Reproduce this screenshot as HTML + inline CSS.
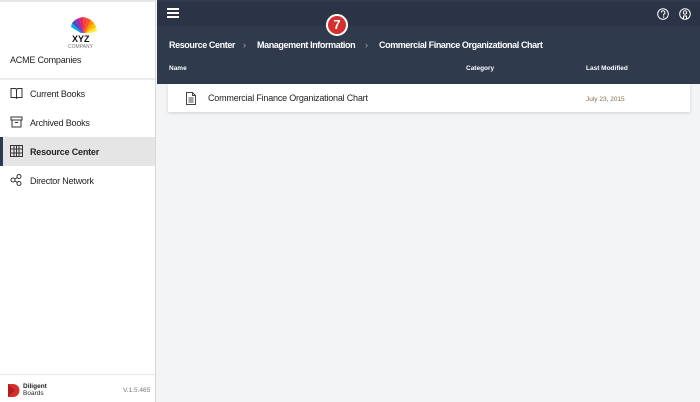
<!DOCTYPE html>
<html><head><meta charset="utf-8"><style>
*{margin:0;padding:0;box-sizing:border-box}
body{width:700px;height:402px;overflow:hidden;background:#f3f4f6;font-family:"Liberation Sans",sans-serif;position:relative}
.side{position:absolute;left:0;top:0;width:156px;height:402px;background:#fff;border-right:1px solid #d8d8d8;border-top:2px solid #e6e6e6}
.acme{position:absolute;left:10px;top:53px;font-size:9px;letter-spacing:-0.2px;color:#222}
.sep{position:absolute;left:0;top:76px;width:155px;height:2px;background:#ececec}
.item{position:absolute;left:0;width:155px;height:29px;font-size:9px;letter-spacing:-0.2px;color:#222;display:flex;align-items:center;padding-left:30px}
.item svg{position:absolute;left:10px;top:8px}
.act{background:#e5e5e5;font-weight:bold;border-left:3px solid #2c3a4f}
.main{position:absolute;left:157px;top:0;width:543px;height:84px;background:#2f3a4d}
.topbar{position:absolute;left:0;top:2px;width:543px;height:24px;background:#2a3446}
.bc{position:absolute;top:40px;font-size:9px;letter-spacing:-0.4px;font-weight:bold;color:#fff}
.col{position:absolute;top:65px;font-size:6.5px;font-weight:bold;color:#fff}
.card{position:absolute;left:168px;top:84px;width:522px;height:28px;background:#fff;box-shadow:0 1px 3px rgba(0,0,0,.15)}
</style></head><body>
<div class="side">
<svg style="position:absolute;left:58px;top:11px" width="44" height="36" viewBox="0 0 44 36">
<g transform="translate(26,22)">
<path d="M0 0 L-12 -12 L-9 -15Z" fill="#3f51b5"/>
<path d="M0 0 L-9 -15 L-5 -17Z" fill="#9c27b0"/>
<path d="M0 0 L-5 -17 L-1 -18Z" fill="#e91e63"/>
<path d="M0 0 L-1 -18 L3 -17Z" fill="#f44336"/>
<path d="M0 0 L3 -17 L7 -15Z" fill="#ff5722"/>
<path d="M0 0 L7 -15 L10 -12Z" fill="#ff9800"/>
<path d="M0 0 L10 -12 L12 -8Z" fill="#ffc107"/>
<path d="M0 0 L12 -8 L13 -4Z" fill="#ffeb3b"/>
<path d="M0 0 L-12 -12 L-13 -8Z" fill="#03a9f4"/>
</g>
<rect x="12" y="20" width="20" height="10" fill="#fff"/>
<text x="14" y="29" font-size="9" font-weight="bold" font-family="Liberation Sans" fill="#111">XYZ</text>
<text x="10" y="35" font-size="5" font-family="Liberation Sans" fill="#777">COMPANY</text>
</svg>
<div class="acme">ACME Companies</div>
<div class="sep"></div>
<div class="item" style="top:77px"><svg width="13" height="12" viewBox="0 0 13 12" fill="none" stroke="#333"><path d="M1 1.5h4.5l1 1 1-1H12v9H7.5l-1 .8-1-.8H1z M6.5 2.5v8.5"/></svg>Current Books</div>
<div class="item" style="top:106px"><svg width="13" height="12" viewBox="0 0 13 12" fill="none" stroke="#333"><path d="M1 1h11v3H1z M2 4v7h9V4 M5 6.5h3"/></svg>Archived Books</div>
<div class="item act" style="top:135px;padding-left:27px"><svg style="left:7px" width="13" height="12" viewBox="0 0 13 12" fill="none" stroke="#333"><path d="M.5 .5h12v11H.5z M4 .5v11 M6.5 .5v11 M9 .5v11 M.5 4h12 M.5 8h12"/></svg>Resource Center</div>
<div class="item" style="top:164px"><svg width="13" height="12" viewBox="0 0 13 12" fill="none" stroke="#333"><circle cx="3" cy="6" r="2"/><circle cx="9" cy="2.5" r="2"/><circle cx="9" cy="9.5" r="2"/><path d="M5 5l2.3-1.5 M5 7l2.3 1.5"/></svg>Director Network</div>
<div style="position:absolute;left:0;top:372px;width:155px;height:1px;background:#e6e6e6"></div>
<svg style="position:absolute;left:8px;top:382px" width="12" height="13" viewBox="0 0 12 13"><path d="M0 0h5a6 6 0 0 1 0 13H0z" fill="#d32f2f"/><path d="M0 0l7 6.5L0 13z" fill="#b71c1c"/></svg>
<div style="position:absolute;left:23px;top:381px;font-size:6.5px;font-weight:bold;color:#222;line-height:7px">Diligent<br><span style="font-weight:normal">Boards</span></div>
<div style="position:absolute;left:123px;top:385px;font-size:6.5px;color:#777">V.1.5.465</div>
</div>
<div class="main">
<div class="topbar">
<div style="position:absolute;left:10px;top:6px;width:12px;height:2px;background:#fff;box-shadow:0 4px 0 #fff,0 8px 0 #fff"></div>
<svg style="position:absolute;left:500px;top:6px" width="12" height="12" viewBox="0 0 12 12" fill="none" stroke="#fff"><circle cx="6" cy="6" r="5.3"/><path d="M4.3 4.6a1.8 1.8 0 1 1 2.3 1.7v1.3"/><circle cx="6.6" cy="9" r=".3"/></svg>
<svg style="position:absolute;left:522px;top:6px" width="12" height="12" viewBox="0 0 12 12" fill="none" stroke="#fff"><circle cx="6" cy="6" r="5.3"/><circle cx="6" cy="4.5" r="1.7"/><path d="M4.5 11V8h3v3"/></svg>
</div>
<div style="position:absolute;left:169px;top:14px;width:22px;height:22px;border-radius:50%;background:#d32f2f;border:2px solid #fff;color:#fff;font-weight:bold;font-size:13px;text-align:center;line-height:18px">7</div>
<div class="bc" style="left:12px">Resource Center</div>
<div class="bc" style="left:86px;font-weight:normal;color:#aaa">›</div>
<div class="bc" style="left:100px">Management Information</div>
<div class="bc" style="left:208px;font-weight:normal;color:#aaa">›</div>
<div class="bc" style="left:222px">Commercial Finance Organizational Chart</div>
<div class="col" style="left:12px">Name</div>
<div class="col" style="left:309px">Category</div>
<div class="col" style="left:429px">Last Modified</div>
</div>
<div class="card">
<svg style="position:absolute;left:18px;top:8px" width="10" height="13" viewBox="0 0 10 13" fill="none" stroke="#444"><path d="M.5 .5h6l3 3v9h-9z M6.5 .5v3h3 M2.5 6h5 M2.5 8h5 M2.5 10h5"/></svg>
<div style="position:absolute;left:40px;top:9px;font-size:9px;letter-spacing:-0.2px;color:#222">Commercial Finance Organizational Chart</div>
<div style="position:absolute;left:418px;top:12px;font-size:6.5px;color:#8a6a50">July 23, 2015</div>
</div>
</body></html>
